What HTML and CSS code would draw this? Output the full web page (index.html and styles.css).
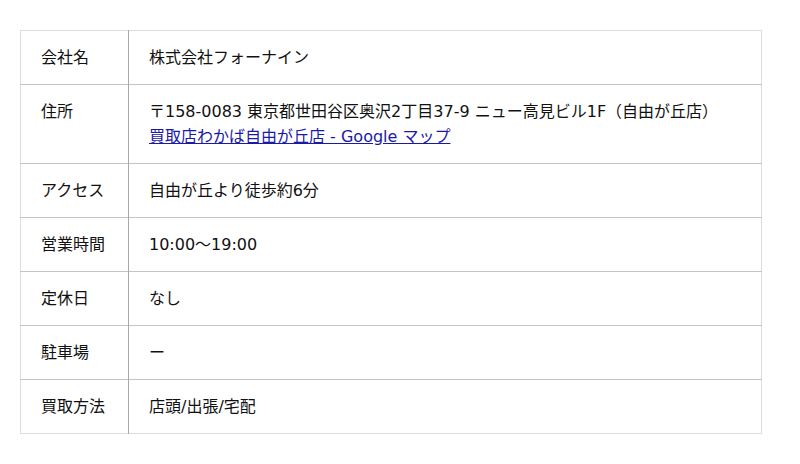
FILE: index.html
```html
<!DOCTYPE html>
<html lang="ja">
<head>
<meta charset="utf-8">
<link rel="stylesheet" href="styles.css">
</head>
<body>
<div class="page">
<table class="info">
<tbody>
<tr><th>会社名</th><td>株式会社フォーナイン</td></tr>
<tr><th>住所</th><td>〒158-0083 東京都世田谷区奥沢2丁目37-9 ニュー高見ビル1F（自由が丘店）<br><a href="#">買取店わかば自由が丘店 - Google マップ</a></td></tr>
<tr><th>アクセス</th><td>自由が丘より徒歩約6分</td></tr>
<tr><th>営業時間</th><td>10:00〜19:00</td></tr>
<tr><th>定休日</th><td>なし</td></tr>
<tr><th>駐車場</th><td>ー</td></tr>
<tr><th>買取方法</th><td>店頭/出張/宅配</td></tr>
</tbody>
</table>
</div>
</body>
</html>
```
FILE: styles.css
```css
html, body {
  margin: 0;
  padding: 0;
  background: #fff;
}
.page {
  padding: 30px 38px 30px 20px;
  font-family: "DejaVu Sans", "Noto Sans CJK JP", sans-serif;
  font-size: 16px;
  color: #111;
}
.info {
  width: 742px;
  border-collapse: collapse;
  border: 1px solid #dcdcdc;
}
.info th, .info td {
  padding: 14px 20px;
  line-height: 25px;
  text-align: left;
  vertical-align: top;
  font-weight: normal;
  border-top: 1px solid #c4c4c4;
}
.info tr:first-child th, .info tr:first-child td {
  border-top: 1px solid #dcdcdc;
}
.info th {
  width: 67px;
  border-right: 1px solid #a8a8a8;
}
.info a {
  color: #1a1aa6;
}
```
